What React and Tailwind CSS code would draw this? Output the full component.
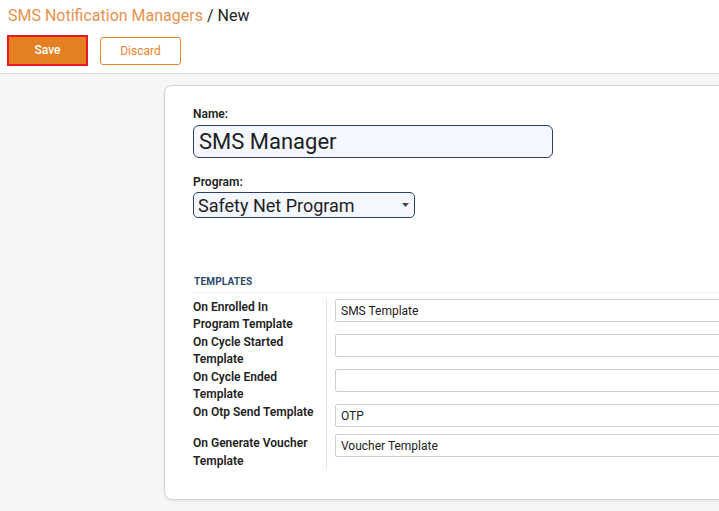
export default function App() {
  const rows = [
    { label: ['On Enrolled In', 'Program Template'], value: 'SMS Template', h: 'h-[35px]' },
    { label: ['On Cycle Started', 'Template'], value: '', h: 'h-[35px]' },
    { label: ['On Cycle Ended', 'Template'], value: '', h: 'h-[35px]' },
    { label: ['On Otp Send Template'], value: 'OTP', h: 'h-[30px]' },
    { label: ['On Generate Voucher', 'Template'], value: 'Voucher Template', h: 'h-[35px]', gen: true },
  ]

  return (
    <div className="w-[719px] h-[511px] overflow-hidden bg-[#f3f3f4] font-['Roboto',sans-serif] flex flex-col">
      <div className="bg-white h-[74px] border-b border-[#d9d9de] pl-[8px] pt-[5px] shrink-0">
        <div className="text-[16px] leading-[22px]">
          <span className="text-[#e8914e]">SMS Notification Managers</span>
          <span className="text-[#222]"> / New</span>
        </div>
        <div className="flex items-center gap-[12px] mt-[8px] -ml-[1px]">
          <button className="w-[81px] h-[31px] bg-[#e47f22] border-2 border-[#e31b23] text-white text-[12px] font-medium leading-[14px] pb-[2px]">
            Save
          </button>
          <button className="w-[81px] h-[28px] border border-[#e8842c] rounded-[3px] bg-white text-[#e8842c] text-[12px]">
            Discard
          </button>
        </div>
      </div>
      <div className="flex-1 flex bg-[#f6f6f7] pt-[11px] overflow-hidden">
        <div className="ml-[164px] w-[640px] shrink-0 h-[415px] bg-white border border-[#d2d2da] rounded-[8px] shadow-[0_1px_3px_rgba(0,0,0,0.08)] pl-[28px] pt-[20px]">
          <div className="text-[12px] font-semibold text-[#222] leading-[16px]">Name:</div>
          <div className="mt-[3px] w-[360px] h-[33px] border-[1.5px] border-[#2c3f6b] rounded-[6px] bg-[#f4f7fe] px-[5px] flex items-center text-[22px] text-[#1e1e1e]">
            SMS Manager
          </div>
          <div className="mt-[16px] text-[12px] font-semibold text-[#222] leading-[16px]">Program:</div>
          <div className="mt-[2px] w-[222px] h-[26px] border-[1.5px] border-[#2c3f6b] rounded-[5px] bg-[#f4f7fe] px-[4px] flex items-center justify-between text-[18px] text-[#1e1e1e]">
            <span>Safety Net Program</span>
            <svg width="7" height="4" viewBox="0 0 7 4" className="mr-[1px]">
              <path d="M0 0h7L3.5 4z" fill="#444" />
            </svg>
          </div>
          <div className="mt-[57px] text-[10px] font-bold text-[#2c4a6e] tracking-[0.2px] pb-[3px] border-b border-[#f0f0f0] ml-[1px] leading-[14px]">
            TEMPLATES
          </div>
          <div className="mt-[6px]">
            {rows.map((r, i) => (
              <div key={i} className={`flex ${r.h}`}>
                <div className={`w-[134px] border-r border-[#e2e2e2] text-[12px] font-semibold text-[#222] ${r.gen ? 'leading-[18px]' : 'leading-[17px]'}`}>
                  {r.label.map((l, j) => (
                    <div key={j}>{l}</div>
                  ))}
                </div>
                <div className="flex-1 pl-[8px]">
                  <div className="h-[23px] border border-[#cfcfcf] rounded-[2px] px-[5px] flex items-center text-[12px] text-[#222]">
                    {r.value}
                  </div>
                </div>
              </div>
            ))}
          </div>
        </div>
      </div>
    </div>
  )
}
